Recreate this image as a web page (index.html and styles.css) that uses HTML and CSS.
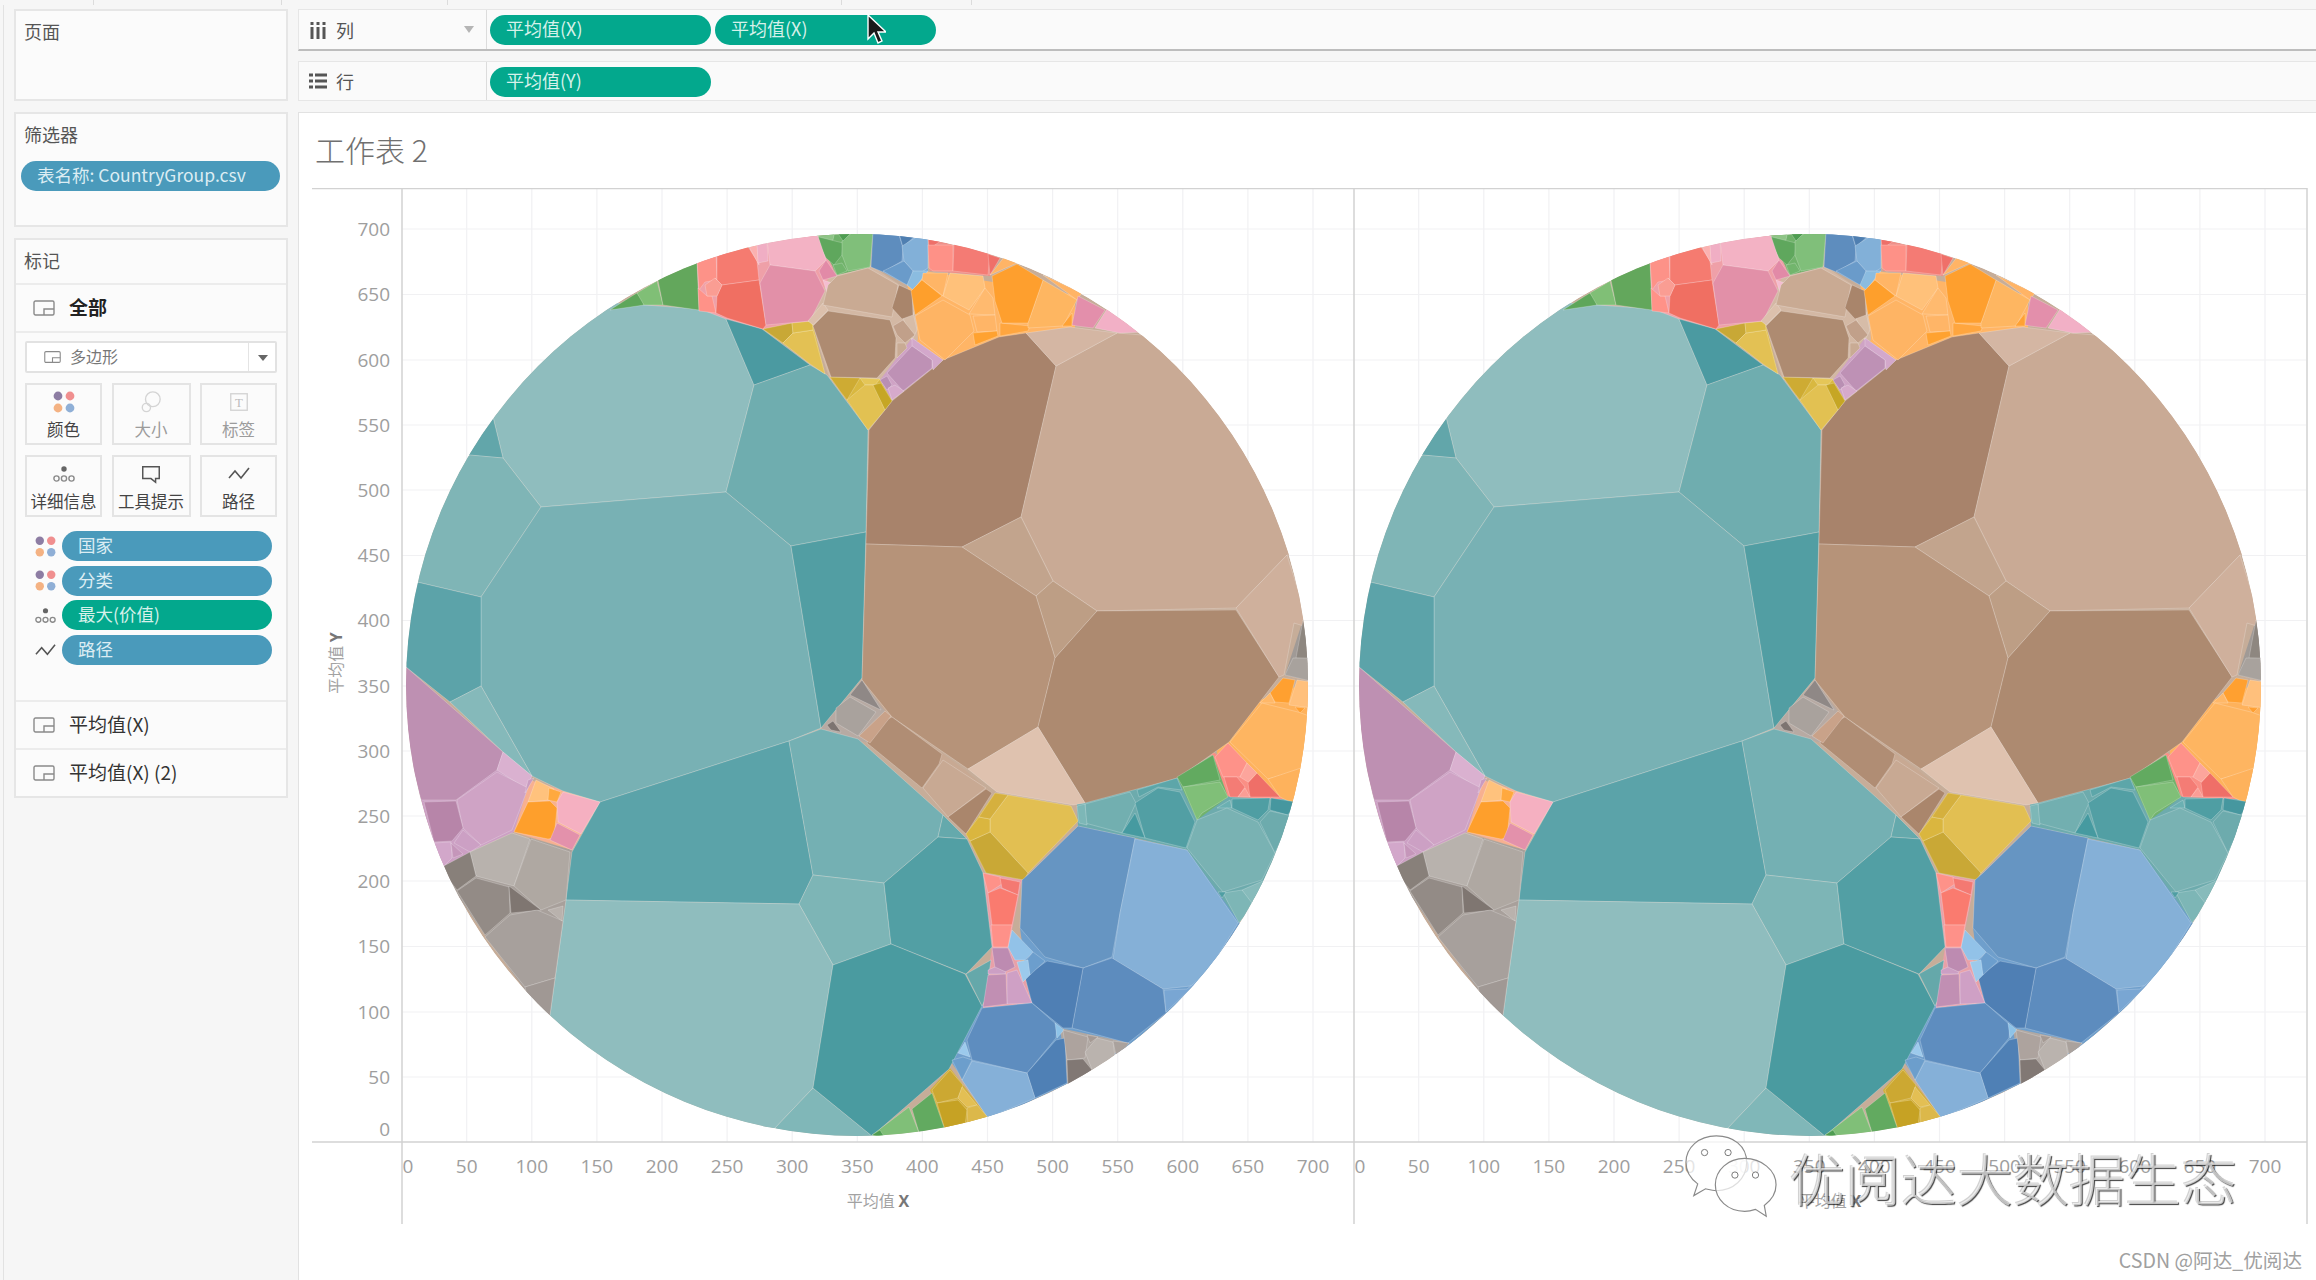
FILE: index.html
```html
<!DOCTYPE html>
<html lang="zh">
<head>
<meta charset="utf-8">
<title>工作表 2</title>
<link rel="stylesheet" href="styles.css">
</head>
<body>
<svg class="defs-only" width="0" height="0" aria-hidden="true">
  <defs>
    <symbol id="i-poly" viewBox="0 0 22 16"><rect x="1" y="1" width="20" height="14" rx="1.5" class="ic-line"/><path d="M11 15V9h10" class="ic-line"/></symbol>
    <symbol id="i-color" viewBox="0 0 22 22"><circle cx="5" cy="5" r="4.4" fill="#8d7da3"/><circle cx="17" cy="5" r="4.4" fill="#f08f8f"/><circle cx="5" cy="17" r="4.4" fill="#f4b283"/><circle cx="17" cy="17" r="4.4" fill="#8fafd6"/></symbol>
    <symbol id="i-detail" viewBox="0 0 22 16"><circle cx="11" cy="3" r="2.7" fill="#666"/><circle cx="3.5" cy="12.5" r="2.6" class="ic-line"/><circle cx="11" cy="12.5" r="2.6" class="ic-line"/><circle cx="18.5" cy="12.5" r="2.6" class="ic-line"/></symbol>
    <symbol id="i-path" viewBox="0 0 22 16"><path d="M1 12 7 5l6 7 8-10" class="ic-dark"/></symbol>
  </defs>
</svg>

<div class="topstrip"><span class="s1"></span><span class="s2"></span><span class="s3"></span><span class="s4"></span><span class="s5"></span></div>

<div class="app">
  <aside class="side">
    <section class="panel pages"><h3 class="ptitle">页面</h3></section>
    <section class="panel filters">
      <h3 class="ptitle">筛选器</h3>
      <div class="pill blue filter-pill">表名称: CountryGroup.csv</div>
    </section>
    <section class="panel marks">
      <h3 class="ptitle marks-title">标记</h3>
      <div class="row row-all"><svg class="ic-poly"><use href="#i-poly"/></svg><b>全部</b></div>
      <div class="marks-body">
        <div class="select">
          <svg class="ic-poly-s"><use href="#i-poly"/></svg><span class="select-text">多边形</span>
          <span class="select-arrow"></span>
        </div>
        <div class="btns">
          <div class="btn"><svg class="bi" viewBox="0 0 22 22"><use href="#i-color"/></svg><span>颜色</span></div>
          <div class="btn off"><svg class="bi" viewBox="0 0 24 24"><circle cx="14" cy="9" r="8" class="ic-pale"/><circle cx="7" cy="18" r="4.5" class="ic-pale"/></svg><span>大小</span></div>
          <div class="btn off"><svg class="bi" viewBox="0 0 24 24"><rect x="3" y="3" width="18" height="18" class="ic-pale"/><text x="12" y="17" class="bi-t">T</text></svg><span>标签</span></div>
          <div class="btn"><svg class="bi" viewBox="0 0 22 16"><use href="#i-detail"/></svg><span>详细信息</span></div>
          <div class="btn"><svg class="bi" viewBox="0 0 24 24"><path d="M3 4h18v13h-4v4l-5-4H3z" class="ic-dark"/></svg><span>工具提示</span></div>
          <div class="btn"><svg class="bi" viewBox="0 0 22 16"><use href="#i-path"/></svg><span>路径</span></div>
        </div>
        <ul class="encs">
          <li class="enc"><svg class="enc-i" viewBox="0 0 22 22"><use href="#i-color"/></svg><div class="pill blue">国家</div></li>
          <li class="enc"><svg class="enc-i" viewBox="0 0 22 22"><use href="#i-color"/></svg><div class="pill blue">分类</div></li>
          <li class="enc"><svg class="enc-i" viewBox="0 0 22 16"><use href="#i-detail"/></svg><div class="pill green">最大(价值)</div></li>
          <li class="enc"><svg class="enc-i" viewBox="0 0 22 16"><use href="#i-path"/></svg><div class="pill blue">路径</div></li>
        </ul>
      </div>
      <div class="row"><svg class="ic-poly"><use href="#i-poly"/></svg>平均值(X)</div>
      <div class="row"><svg class="ic-poly"><use href="#i-poly"/></svg>平均值(X) (2)</div>
    </section>
  </aside>

  <main class="main">
    <div class="shelf shelf-cols">
      <div class="shelf-head">
        <svg class="shelf-ic" viewBox="0 0 17 18"><path d="M1 6h3v12H1zM7 6h3v12H7zM13 6h3v12h-3zM1 1h3v3H1zM7 1h3v3H7zM13 1h3v3h-3z" class="ic-fill"/></svg>
        <span class="shelf-name">列</span><span class="shelf-arrow"></span>
      </div>
      <div class="shelf-pills"><div class="pill green shelf-pill">平均值(X)</div><div class="pill green shelf-pill">平均值(X)</div></div>
    </div>
    <div class="shelf shelf-rows">
      <div class="shelf-head">
        <svg class="shelf-ic" viewBox="0 0 18 15"><path d="M0 0h4v3H0zM6 0h12v3H6zM0 6h4v3H0zM6 6h12v3H6zM0 12h4v3H0zM6 12h12v3H6z" class="ic-fill"/></svg>
        <span class="shelf-name">行</span>
      </div>
      <div class="shelf-pills"><div class="pill green shelf-pill">平均值(Y)</div></div>
    </div>

    <div class="canvas">
      <h1 class="sheet-title">工作表 2</h1>
      <svg class="chart" viewBox="312 188 1998 1040">
        <defs>
          <clipPath id="disc"><circle cx="857" cy="685" r="451"/></clipPath>
          <g id="grid" class="grid">
            <path d="M466.7 188V1142M531.8 188V1142M596.9 188V1142M662 188V1142M727.1 188V1142M792.2 188V1142M857.3 188V1142M922.4 188V1142M987.5 188V1142M1052.6 188V1142M1117.7 188V1142M1182.8 188V1142M1247.9 188V1142M1313 188V1142"/>
            <path d="M402 229H1354M402 294.5H1354M402 360H1354M402 425H1354M402 490H1354M402 555.5H1354M402 620.5H1354M402 686H1354M402 751H1354M402 816H1354M402 881H1354M402 946.5H1354M402 1012H1354M402 1077H1354"/>
          </g>
          <g id="xaxis" class="ticks ticks-x">
            <text x="408" y="1173">0</text><text x="466.7" y="1173">50</text><text x="531.8" y="1173">100</text><text x="596.9" y="1173">150</text><text x="662" y="1173">200</text><text x="727.1" y="1173">250</text><text x="792.2" y="1173">300</text><text x="857.3" y="1173">350</text><text x="922.4" y="1173">400</text><text x="987.5" y="1173">450</text><text x="1052.6" y="1173">500</text><text x="1117.7" y="1173">550</text><text x="1182.8" y="1173">600</text><text x="1247.9" y="1173">650</text><text x="1313" y="1173">700</text>
            <text x="878" y="1207" class="axis-title">平均值 <tspan class="axis-strong">X</tspan></text>
          </g>
          <g id="marks" clip-path="url(#disc)" class="cells">
            <circle cx="857" cy="685" r="451" class="base"/>
            <!-- cluster underlays, showing through the seams -->
            <g class="under">
              <polygon fill="#ffb566" points="905,268 1075,295 1075,330 1000,340 945,362 915,340"/>
              <polygon fill="#efa0a8" points="695,260 830,232 835,295 815,325 766,330 700,312"/>
              <polygon fill="#d3b8a4" points="810,320 830,275 870,265 915,295 918,340 880,380 830,380"/>
              <polygon fill="#feb25c" points="1215,740 1260,700 1315,680 1315,800 1225,800"/>
              <polygon fill="#fa8f85" points="1210,750 1285,800 1225,800"/>
              <polygon fill="#6dabad" points="1077,804 1180,775 1230,797 1300,800 1260,890 1235,925 1187,850 1135,838 1078,826"/>
              <polygon fill="#6f9fcc" points="950,1060 980,1005 1030,1003 1020,928 1078,826 1187,850 1240,923 1200,985 1170,1010 1130,1045 1065,1085 990,1120"/>
              <polygon fill="#e8a0a8" points="983,873 1022,880 1012,930 1032,1003 983,1008 992,947"/>
              <polygon fill="#b0a8a3" points="1060,1028 1130,1043 1068,1086"/>
              <polygon fill="#d4b03c" points="930,1090 950,1068 990,1120 945,1130"/>
              <polygon fill="#a8a09b" points="440,870 470,852 530,838 572,850 566,900 550,1015 525,990 485,935"/>
              <polygon fill="#cca0c4" points="421,800 456,800 503,752 532,776 514,832 470,852 440,870"/>
              <polygon fill="#f7b090" points="514,832 530,780 600,802 572,850"/>
              <polygon fill="#c8a993" points="860,680 885,711 948,817 966,834 992,793 965,770 892,717"/>
              <polygon fill="#b7aaa3" points="862,680 885,711 870,743 830,735 821,728"/>
              <polygon fill="#d9b743" points="966,834 995,793 1071,806 1078,821 1028,873 986,873"/>
              <polygon fill="#e0bf50" points="763,329 812,321 825,374"/>
              <polygon fill="#d9b840" points="830,377 880,379 892,401 868,430"/>
              <polygon fill="#cfa3c5" points="880,380 912,338 943,360 904,391 892,400"/>
              <polygon fill="#7aa8d4" points="871,233 928,236 928,271 907,285 883,272"/>
              <polygon fill="#70b26a" points="815,233 873,233 870,267 837,275"/>
              <polygon fill="#ef8f88" points="928,238 1000,258 990,276 930,271"/>
              <polygon fill="#71b26c" points="1177,777 1213,755 1228,797 1197,820"/>
              <polygon fill="#a09a96" points="1285,675 1303,620 1315,682"/>
            </g>
            <!-- teal -->
            <polygon fill="#8fbdbe" points="617,303 700,309 726,319 754,385 726,492 541,507 503,458 493,417 480,380 520,300"/>
            <polygon fill="#4b9aa1" points="726,319 762,329 810,365 754,385"/>
            <polygon fill="#6fadaf" points="754,385 810,365 827,375 868,430 866,532 791,546 726,492"/>
            <polygon fill="#62a6aa" points="493,417 503,458 468,455 480,410"/>
            <polygon fill="#7fb5b6" points="470,455 503,458 541,507 481,597 417,582 400,500"/>
            <polygon fill="#78b1b4" points="541,507 726,492 791,546 821,728 789,741 600,802 563,791 532,776 481,686 481,597"/>
            <polygon fill="#5ca3a9" points="417,582 481,597 481,686 450,702 406,667 395,620"/>
            <polygon fill="#85b9ba" points="450,702 481,686 532,776 503,752"/>
            <polygon fill="#529ea3" points="791,546 866,532 862,678 821,728"/>
            <polygon fill="#5ba3a9" points="789,741 813,875 799,904 566,900 572,852 600,802"/>
            <polygon fill="#74b0b3" points="821,729 858,739 943,815 938,837 884,883 813,875 789,741"/>
            <polygon fill="#65a9ac" points="943,815 967,839 938,837"/>
            <polygon fill="#7db5b6" points="813,875 884,883 891,944 833,965 799,904"/>
            <polygon fill="#529fa4" points="884,883 938,837 967,839 983,873 992,947 966,974 891,944"/>
            <polygon fill="#8fbdbe" points="566,900 799,904 833,965 813,1088 775,1128 700,1180 500,1080 550,1015"/>
            <polygon fill="#80b7b8" points="813,1088 775,1128 800,1160 872,1136"/>
            <polygon fill="#4a9ba0" points="891,944 965,974 982,1006 949,1069 872,1136 813,1088 833,965"/>
            <polygon fill="#65a8aa" points="966,974 991,960 985,1000 982,1006"/>
            <!-- brown -->
            <polygon fill="#a8836b" points="1026,333 1056,366 1021,517 962,547 866,544 869,430 892,401 943,360 999,337"/>
            <polygon fill="#c9aa95" points="1056,366 1117,333 1142,335 1200,380 1320,555 1287,555 1236,608 1097,611 1053,581 1021,517"/>
            <polygon fill="#d4b6a3" points="1026,333 1070,327 1117,333 1056,366"/>
            <polygon fill="#c2a48d" points="962,547 1021,517 1053,581 1036,596"/>
            <polygon fill="#bd9e85" points="1053,581 1097,611 1055,658 1036,596"/>
            <polygon fill="#b69379" points="866,544 962,547 1036,596 1055,658 1038,727 968,769 892,717 862,680"/>
            <polygon fill="#ad8a70" points="1097,611 1236,610 1279,677 1229,742 1178,778 1085,803 1038,727 1055,658"/>
            <polygon fill="#cfb09c" points="1236,608 1287,555 1310,628 1294,623 1284,675 1279,677"/>
            <polygon fill="#dfc2af" points="968,769 1038,727 1085,803 1073,805 997,792"/>
            <polygon fill="#b08d74" points="892,717 942,754 939,764 922,788 867,743 876,725"/>
            <polygon fill="#c8a993" points="943,760 986,788 948,817 923,788"/>
            <polygon fill="#aa866c" points="986,789 992,793 966,834 948,817"/>
            <polygon fill="#c9a289" points="885,711 891,716 870,743 859,736"/>
            <!-- grey centre -->
            <polygon fill="#8f8886" points="862,680 881,710 850,695"/>
            <polygon fill="#a9a29d" points="850,697 876,712 858,736 836,723 836,708"/>
            <polygon fill="#7d7471" points="827,725 833,721 841,732 831,730"/>
            <!-- yellow centre -->
            <polygon fill="#e2bf52" points="1008,795 1071,806 1078,821 1028,873 990,832 990,819"/>
            <polygon fill="#c9a836" points="990,832 1028,873 1024,880 986,873 970,841"/>
            <polygon fill="#dab63f" points="979,817 990,819 990,832 970,841 966,834"/>
            <polygon fill="#d5b03e" points="995,793 1008,795 990,819 979,817"/>
            <!-- yellow top -->
            <polygon fill="#c8a836" points="763,329 792,323 793,333 783,343"/>
            <polygon fill="#e3c154" points="783,343 793,333 813,330 825,374 810,364"/>
            <polygon fill="#ddbc48" points="792,323 812,321 813,330 793,333"/>
            <polygon fill="#ceab33" points="830,377 860,378 847,400 840,391"/>
            <polygon fill="#e5c658" points="860,378 880,379 875,385 865,385"/>
            <polygon fill="#e2c152" points="865,385 875,385 885,410 868,430 847,400"/>
            <polygon fill="#c6a624" points="873,385 881,383 892,401 885,410"/>
            <!-- greens top -->
            <polygon fill="#5ea65a" points="610,310 632,296 637,293 643,300 644,305"/>
            <polygon fill="#80bf76" points="637,293 657,281 663,305 644,305"/>
            <polygon fill="#63a75c" points="658,280 688,264 697,262 699,310 663,305"/>
            <polygon fill="#8ec486" points="815,233 835,230 833,240 825,245"/>
            <polygon fill="#5fa75d" points="815,236 843,243 842,255 834,265 826,258"/>
            <polygon fill="#80bf7a" points="842,241 853,232 873,232 870,267 848,271 842,255"/>
            <polygon fill="#4f9d52" points="837,232 852,232 843,241"/>
            <polygon fill="#72b56d" points="833,265 842,263 847,271 837,275"/>
            <!-- reds top -->
            <polygon fill="#fd9288" points="697,260 716,252 717,280 705,282 699,290"/>
            <polygon fill="#ff9288" points="698,288 707,296 712,296 716,313 699,311"/>
            <polygon fill="#f57b70" points="717,256 747,245 757,261 759,280 722,285 715,278 717,280"/>
            <polygon fill="#f06f62" points="717,296 722,285 759,280 766,325 763,329 727,318 716,313"/>
            <polygon fill="#fa9d93" points="705,285 715,278 722,285 717,296 707,296"/>
            <!-- pinks top -->
            <polygon fill="#fbb1b0" points="747,243 757,243 759,265"/>
            <polygon fill="#f0aec4" points="757,243 767,241 768,261 758,263"/>
            <polygon fill="#f3b2c4" points="767,240 817,233 826,260 815,271 770,265"/>
            <polygon fill="#e290a8" points="770,265 815,271 825,291 810,321 766,325 760,283"/>
            <polygon fill="#e28aa7" points="826,260 837,276 823,280 819,271"/>
            <polygon fill="#f4bdd0" points="823,280 832,283 827,293"/>
            <!-- tan top -->
            <polygon fill="#dcc0ac" points="823,303 808,321 813,325 828,310"/>
            <polygon fill="#c9aa93" points="868,268 898,285 892,317 823,305 828,285 837,276"/>
            <polygon fill="#d6bca8" points="903,318 913,312 917,330 912,340"/>
            <polygon fill="#ae8b71" points="828,311 890,320 896,338 895,358 877,378 831,377 813,326"/>
            <polygon fill="#a9856b" points="899,285 912,291 913,315 902,319 892,308"/>
            <polygon fill="#c1a08a" points="893,326 903,320 915,335 905,343 897,335"/>
            <polygon fill="#c9ab94" points="897,343 905,343 907,348 897,358"/>
            <!-- purple top -->
            <polygon fill="#d3a8cb" points="912,338 943,360 933,370 932,360 912,346"/>
            <polygon fill="#be91b5" points="912,346 932,360 932,368 903,391 887,373"/>
            <polygon fill="#b98fb3" points="880,380 887,376 892,385 887,390"/>
            <polygon fill="#d6aacb" points="888,388 895,385 904,391 892,400"/>
            <!-- blues top -->
            <polygon fill="#5e8dbe" points="873,232 898,232 903,248 902,261 883,272 871,267"/>
            <polygon fill="#4f7fb1" points="898,230 918,233 903,247"/>
            <polygon fill="#82b0d8" points="902,246 918,236 928,239 928,268 920,273 913,271 904,261"/>
            <polygon fill="#6a9bca" points="904,261 913,271 912,280 907,285 883,271"/>
            <polygon fill="#8bbce0" points="913,271 928,271 913,290 907,285"/>
            <!-- oranges top -->
            <polygon fill="#ee6f69" points="928,236 942,240 929,249"/>
            <polygon fill="#fe9187" points="928,245 953,245 953,271 933,271 929,268"/>
            <polygon fill="#f47b74" points="954,243 990,254 988,275 953,271"/>
            <polygon fill="#ef7069" points="988,254 1000,258 990,275"/>
            <polygon fill="#ffb466" points="990,275 1005,256 1017,263"/>
            <polygon fill="#ffb566" points="923,273 948,273 943,296 922,280"/>
            <polygon fill="#ffc17a" points="950,273 983,276 985,288 969,310 943,296"/>
            <polygon fill="#ffba6f" points="985,288 993,298 995,315 969,314"/>
            <polygon fill="#fe9f2c" points="922,280 942,296 915,315 911,291"/>
            <polygon fill="#feb464" points="915,316 943,300 970,315 974,331 945,360 920,340"/>
            <polygon fill="#ffb567" points="973,316 995,315 997,331 977,332"/>
            <polygon fill="#ffa230" points="973,333 997,331 998,336 975,345"/>
            <polygon fill="#ffa63f" points="1000,323 1030,326 1028,331 1000,336"/>
            <polygon fill="#ffb466" points="1043,275 1082,293 1077,300"/>
            <polygon fill="#feb661" points="1043,280 1077,300 1063,326 1028,328 1028,323"/>
            <polygon fill="#fe9f2e" points="992,276 1017,264 1043,280 1028,323 1002,323 995,301"/>
            <polygon fill="#ffa234" points="1072,313 1062,326 1072,326"/>
            <polygon fill="#e38fab" points="1078,296 1105,310 1093,328 1077,326 1072,325"/>
            <polygon fill="#f2b0c6" points="1107,309 1145,332 1120,333 1095,328"/>
            <!-- right grey / orange -->
            <polygon fill="#8e8780" points="1303,620 1315,659 1296,658"/>
            <polygon fill="#a8a29d" points="1293,658 1315,658 1315,682 1285,675"/>
            <polygon fill="#ffa030" points="1270,693 1283,678 1295,680 1289,703 1275,702"/>
            <polygon fill="#ffc07c" points="1297,680 1312,682 1312,708 1289,705"/>
            <polygon fill="#ffb868" points="1260,703 1270,693 1275,703"/>
            <polygon fill="#feb561" points="1230,742 1262,703 1298,712 1312,717 1304,769 1268,779"/>
            <polygon fill="#ff9f30" points="1295,707 1305,708 1300,713"/>
            <polygon fill="#feb25c" points="1268,779 1304,767 1296,805 1280,797"/>
            <polygon fill="#fe9289" points="1215,757 1228,743 1247,763 1240,777 1223,777"/>
            <polygon fill="#fca59c" points="1247,763 1257,773 1248,782 1240,777"/>
            <polygon fill="#f47c75" points="1224,777 1237,777 1245,787 1238,797 1230,797"/>
            <polygon fill="#ef6f68" points="1248,783 1257,773 1280,797 1250,797"/>
            <polygon fill="#fb9d95" points="1238,797 1245,788 1250,797"/>
            <polygon fill="#62aa60" points="1177,777 1213,755 1220,780 1183,787"/>
            <polygon fill="#80bf78" points="1183,787 1220,782 1228,797 1202,813 1197,820"/>
            <!-- right teal -->
            <polygon fill="#72afb0" points="1085,804 1130,792 1136,803 1122,833 1085,823"/>
            <polygon fill="#5da6a9" points="1137,790 1177,778 1182,790 1158,787 1139,797"/>
            <polygon fill="#529fa4" points="1135,803 1158,788 1180,792 1195,822 1186,848 1145,838"/>
            <polygon fill="#469aa0" points="1135,813 1145,838 1122,833"/>
            <polygon fill="#7db7b7" points="1077,806 1085,804 1087,825 1079,823"/>
            <polygon fill="#6bb0b2" points="1217,808 1230,800 1232,808 1227,808"/>
            <polygon fill="#79b2b3" points="1187,848 1197,820 1227,808 1258,822 1275,853 1262,880 1223,892"/>
            <polygon fill="#4f9ea3" points="1232,799 1270,798 1268,810 1258,820 1232,808"/>
            <polygon fill="#46979f" points="1271,798 1296,802 1288,815 1270,810"/>
            <polygon fill="#6dabad" points="1270,811 1292,816 1275,853 1260,822"/>
            <polygon fill="#7db6b6" points="1223,893 1242,890 1255,903 1239,923"/>
            <polygon fill="#87bbbb" points="1242,890 1265,880 1252,903"/>
            <polygon fill="#4f9ea3" points="1218,892 1226,892 1222,898"/>
            <!-- blue right -->
            <polygon fill="#6695c2" points="1078,826 1135,838 1120,913 1112,957 1083,968 1045,957 1020,928 1022,880 1030,873"/>
            <polygon fill="#85b0d7" points="1135,839 1187,850 1238,923 1200,985 1163,989 1113,959 1120,913"/>
            <polygon fill="#5d8cbe" points="1083,968 1112,958 1163,989 1166,1013 1128,1043 1072,1028"/>
            <polygon fill="#79a6d3" points="1164,990 1187,989 1207,973 1166,1012"/>
            <polygon fill="#4f7fb4" points="1025,977 1047,961 1083,968 1072,1028 1063,1028 1032,1003"/>
            <polygon fill="#92c2e8" points="1012,930 1033,952 1025,960 1015,960 1008,947"/>
            <polygon fill="#6c9ecd" points="1033,952 1045,961 1030,975 1025,962"/>
            <polygon fill="#9ccaec" points="1017,962 1028,960 1030,975 1023,982"/>
            <!-- mid pink -->
            <polygon fill="#bd8bb1" points="992,948 1008,948 1015,967 1005,972 995,968"/>
            <polygon fill="#cc9fc4" points="988,970 995,967 1006,972 1005,974 988,974"/>
            <polygon fill="#cfa0c5" points="1007,973 1017,970 1032,1003 1007,1004"/>
            <polygon fill="#c18fb3" points="988,975 1006,974 1007,1004 983,1007"/>
            <!-- mid salmon -->
            <polygon fill="#fe9289" points="983,873 1000,877 1002,884 988,893"/>
            <polygon fill="#f47972" points="1000,878 1020,882 1018,895 1002,888"/>
            <polygon fill="#fa7b6f" points="988,893 1000,888 1018,895 1012,925 992,925"/>
            <polygon fill="#fe9189" points="991,925 1012,925 1008,947 993,947"/>
            <!-- lower blues -->
            <polygon fill="#5e8dbf" points="982,1008 1032,1003 1057,1025 1056,1038 1027,1073 972,1060 967,1040"/>
            <polygon fill="#4f80b5" points="1027,1073 1056,1040 1065,1038 1067,1083 1035,1098"/>
            <polygon fill="#85b0d8" points="972,1061 1027,1073 1035,1098 988,1118 962,1080"/>
            <polygon fill="#6c9ecc" points="952,1060 963,1057 972,1060 962,1080"/>
            <polygon fill="#9ccaec" points="958,1053 965,1042 970,1057"/>
            <polygon fill="#8ec3e8" points="1055,1023 1064,1030 1057,1038"/>
            <!-- bottom greys -->
            <polygon fill="#ada39e" points="1063,1030 1088,1037 1085,1058 1067,1060"/>
            <polygon fill="#a59a94" points="1087,1035 1098,1037 1090,1043"/>
            <polygon fill="#bab3ae" points="1085,1052 1097,1038 1113,1042 1115,1057 1093,1072"/>
            <polygon fill="#aaa29d" points="1113,1041 1129,1043 1117,1060"/>
            <polygon fill="#817874" points="1067,1060 1083,1059 1092,1070 1068,1086"/>
            <!-- bottom gold / green -->
            <polygon fill="#cca832" points="932,1090 950,1070 963,1085 958,1098 937,1103"/>
            <polygon fill="#e3bf54" points="962,1087 977,1105 967,1107 958,1098"/>
            <polygon fill="#c6a224" points="937,1103 958,1100 967,1110 965,1126 945,1130"/>
            <polygon fill="#dcb84a" points="967,1108 977,1105 990,1120 968,1126"/>
            <polygon fill="#62aa60" points="912,1109 932,1093 945,1130 920,1136"/>
            <polygon fill="#80bf78" points="872,1135 909,1107 921,1138 880,1140"/>
            <polygon fill="#4f9d52" points="872,1135 880,1130 885,1138"/>
            <!-- left purple -->
            <polygon fill="#be90b2" points="406,667 503,752 497,770 456,800 421,800 395,700"/>
            <polygon fill="#dab1d0" points="503,752 532,776 525,788 497,770"/>
            <polygon fill="#cfa3c5" points="497,772 528,788 512,830 481,845 463,828 457,800"/>
            <polygon fill="#b785a9" points="424,802 456,801 463,828 452,841 434,842"/>
            <polygon fill="#cca0c4" points="463,830 481,845 470,852 454,843"/>
            <polygon fill="#d2a7ca" points="434,843 451,842 452,858 440,870"/>
            <polygon fill="#c596ba" points="451,843 463,854 453,858"/>
            <polygon fill="#c99bc0" points="528,780 534,778 525,793"/>
            <!-- left orange / pink -->
            <polygon fill="#ffc27d" points="536,780 554,789 550,800 528,802"/>
            <polygon fill="#ffa93f" points="549,788 561,792 557,802 548,800"/>
            <polygon fill="#fe9f2c" points="528,802 550,801 557,808 554,838 548,839 514,832"/>
            <polygon fill="#f5b0c1" points="563,792 600,802 581,834 558,822 557,802"/>
            <polygon fill="#e391ab" points="557,823 580,835 572,850 550,840"/>
            <!-- left grey -->
            <polygon fill="#b8b2ad" points="470,852 512,833 530,839 514,886 476,876"/>
            <polygon fill="#afa8a2" points="531,839 570,852 566,900 541,910 514,886"/>
            <polygon fill="#88807a" points="440,868 470,852 476,876 457,890"/>
            <polygon fill="#938b86" points="457,891 476,878 509,887 510,913 485,935"/>
            <polygon fill="#7f7671" points="509,886 541,910 511,913"/>
            <polygon fill="#a7a09c" points="485,937 510,915 537,910 563,921 555,978 525,987"/>
            <polygon fill="#b9b2ad" points="548,910 563,906 562,921"/>
            <polygon fill="#a09894" points="525,987 555,978 550,1015 535,1030"/>
          </g>
        </defs>

        <use href="#grid"/>
        <use href="#grid" x="952"/>
        <use href="#marks"/>
        <use href="#marks" x="953"/>
        <path class="frame" d="M312 188.5H2307M312 1142H2307M402 188V1224M1354 188V1224M2307 188V1224"/>
        <g class="ticks ticks-y">
          <text x="390" y="236">700</text><text x="390" y="301">650</text><text x="390" y="367">600</text><text x="390" y="432">550</text><text x="390" y="497">500</text><text x="390" y="562">450</text><text x="390" y="627">400</text><text x="390" y="693">350</text><text x="390" y="758">300</text><text x="390" y="823">250</text><text x="390" y="888">200</text><text x="390" y="953">150</text><text x="390" y="1019">100</text><text x="390" y="1084">50</text><text x="390" y="1136">0</text>
        </g>
        <text class="axis-title" transform="translate(342 663) rotate(-90)">平均值 <tspan class="axis-strong">Y</tspan></text>
        <use href="#xaxis"/>
        <use href="#xaxis" x="952"/>
      </svg>
    </div>
  </main>
</div>

<svg class="cursor" viewBox="0 0 20 30"><path d="M2 1v24l6-6 4 10 4-2-4-9h8z"/></svg>

<div class="watermark">
  <svg class="wx" viewBox="0 0 96 92">
    <path class="wx-b" d="M33 3C15 3 2 15 2 30c0 9 5 17 12 22l-4 12 12-7c4 1 7 2 11 2 17 0 31-12 31-29S50 3 33 3z"/>
    <path class="wx-b" d="M62 26c-17 0-30 12-30 27s13 27 30 27c4 0 8-1 11-2l11 7-2-11c7-5 12-13 12-21 0-15-15-27-32-27z"/>
    <circle cx="21" cy="20" r="3.2" class="wx-e"/><circle cx="45" cy="20" r="3.2" class="wx-e"/>
    <circle cx="52" cy="43" r="3.2" class="wx-e"/><circle cx="73" cy="43" r="3.2" class="wx-e"/>
  </svg>
  <span class="wm-text">优阅达大数据生态</span>
</div>
<div class="credit">CSDN @阿达_优阅达</div>
</body>
</html>
```

FILE: styles.css
```css
* { box-sizing: border-box; }
html, body { margin: 0; padding: 0; }
body {
  width: 2316px;
  height: 1280px;
  overflow: hidden;
  position: relative;
  background: #f6f6f6;
  color: #444;
  font-family: "Noto Sans CJK SC", "Noto Sans", sans-serif;
  font-size: 18px;
}
.defs-only { position: absolute; }
.ic-line { fill: none; stroke: #8a8a8a; stroke-width: 1.4; }
.ic-dark { fill: none; stroke: #555; stroke-width: 1.6; }
.ic-pale { fill: none; stroke: #d4d4d4; stroke-width: 1.5; }
.ic-fill { fill: #555; }

.topstrip { display: flex; height: 5px; }
.topstrip span { border-right: 1px solid #dcdcdc; }
.s1 { width: 94px; }
.s2 { width: 188px; }
.s3 { width: 166px; }
.s4 { width: 394px; }
.s5 { width: 130px; }

.app { display: flex; height: 1275px; margin-left: 3px; border-left: 1px solid #e2e2e2; }

/* sidebar */
.side {
  width: 294px;
  flex: none;
  padding: 4px 0 0 10px;
  display: flex;
  flex-direction: column;
  gap: 11px;
}
.panel { width: 274px; background: #fbfbfb; border: 2px solid #e6e6e6; }
.pages { height: 92px; }
.filters { height: 115px; }
.ptitle { margin: 0; font-size: 18px; font-weight: 400; line-height: 24px; color: #555; padding: 8px 0 0 8px; }
.filter-pill { margin: 15px 6px 0 5px; height: 30px; font-size: 18px; }
.marks-title { height: 45px; padding-top: 8px; border-bottom: 2px solid #ececec; }
.row {
  height: 48px;
  display: flex;
  align-items: center;
  gap: 14px;
  padding: 0 0 4px 17px;
  font-size: 19px;
  color: #333;
  border-top: 2px solid #ececec;
}
.row-all { border-top: 0; height: 46px; }
.row b { font-weight: 700; color: #222; }
.ic-poly { width: 22px; height: 16px; flex: none; margin-top: 4px; }
.marks-body { padding: 8px 8px 35px 9px; border-top: 2px solid #ececec; }

.select {
  height: 32px;
  width: 252px;
  display: flex;
  align-items: center;
  border: 2px solid #e2e2e2;
  border-radius: 2px;
  background: #fff;
  padding: 0 0 2px 17px;
  color: #777;
  font-size: 16px;
  position: relative;
}
.ic-poly-s { width: 17px; height: 14px; margin: 2px 9px 0 0; }
.select-arrow {
  position: absolute;
  right: 0;
  top: 0;
  width: 27px;
  height: 28px;
  border-left: 1px solid #e4e4e4;
}
.select-arrow::after {
  content: "";
  position: absolute;
  left: 9px;
  top: 12px;
  border: 5px solid transparent;
  border-top: 6px solid #666;
  border-bottom: 0;
}
.btns {
  display: grid;
  grid-template-columns: 77px 79px 77px;
  grid-auto-rows: 62px;
  gap: 10px 9.5px;
  margin-top: 10px;
}
.btn {
  border: 2px solid #e4e4e4;
  background: #fbfbfb;
  display: flex;
  flex-direction: column;
  align-items: center;
  justify-content: flex-end;
  padding-bottom: 2px;
  font-size: 16.5px;
  line-height: 24px;
  color: #444;
  white-space: nowrap;
}
.btn.off { color: #9c9c9c; }
.bi { width: 22px; height: 22px; margin-bottom: 4px; }
.bi-t { font-family: "Liberation Serif", serif; font-size: 14px; text-anchor: middle; fill: #bbb; }

.encs { list-style: none; margin: 14px 0 0; padding: 0 0 0 10px; display: flex; flex-direction: column; gap: 4.7px; }
.enc { display: flex; align-items: center; gap: 6px; }
.enc-i { width: 21px; height: 21px; flex: none; }
.enc .pill { width: 210px; }

/* pills */
.pill {
  height: 30px;
  border-radius: 15px;
  padding-left: 16px;
  font-size: 17.5px;
  line-height: 27px;
  color: #dcedf3;
  white-space: nowrap;
}
.blue { background: #4a9abb; }
.green { background: #03a88d; color: #d6f1ea; }

/* shelves */
.main { flex: 1; display: flex; flex-direction: column; min-width: 0; padding-top: 4px; }
.shelf {
  display: flex;
  background: #fafafa;
  border: 1px solid #e6e6e6;
  border-right: 0;
}
.shelf-cols { height: 42px; border-bottom: 2px solid #bdbdbd; }
.shelf-rows { height: 40px; margin-top: 10px; }
.shelf-head {
  width: 188px;
  flex: none;
  display: flex;
  align-items: center;
  padding-left: 10px;
  border-right: 1px solid #dcdcdc;
  position: relative;
}
.shelf-ic { width: 18px; height: 18px; margin-right: 9px; }
.shelf-name { font-size: 18px; color: #555; }
.shelf-arrow {
  position: absolute;
  left: 165px;
  top: 16px;
  border: 5px solid transparent;
  border-top: 7px solid #b5b5b5;
  border-bottom: 0;
}
.shelf-pills { display: flex; gap: 4px; padding: 5px 0 0 3px; }
.shelf-pill { width: 221px; font-size: 18px; }

/* canvas */
.canvas {
  flex: 1;
  margin-top: 11px;
  background: #fff;
  border-top: 1px solid #e2e2e2;
  border-left: 1px solid #e2e2e2;
  padding-left: 13px;
}
.sheet-title {
  height: 75px;
  margin: 0;
  padding-left: 3px;
  font-size: 30px;
  font-weight: 300;
  line-height: 73px;
  color: #707070;
}
.chart { display: block; width: 1998px; height: 1040px; }

.grid path { fill: none; stroke: #f1f1f3; stroke-width: 1.2; }
.frame { fill: none; stroke: #d2d2d2; stroke-width: 1.5; }
.cells polygon { stroke: rgba(255,255,255,.28); stroke-width: .8; stroke-linejoin: round; }
.cells .under polygon { stroke: none; }
.base { fill: #c6ad99; }
.ticks text { font-family: "Open Sans", "Noto Sans", sans-serif; font-size: 19px; fill: #9e9e9e; }
.ticks-y text { text-anchor: end; }
.ticks-x text { text-anchor: middle; }
.ticks text.axis-title, .axis-title {
  font-family: "Noto Sans CJK SC", sans-serif;
  font-size: 16px;
  fill: #a2a2a2;
  text-anchor: middle;
}
.axis-strong { font-family: "Open Sans", sans-serif; font-weight: 700; fill: #777; }

/* overlays */
.cursor { position: absolute; left: 866px; top: 14px; width: 20px; height: 30px; }
.cursor path { fill: #1a1a1a; stroke: #fff; stroke-width: 1.4; }

.watermark {
  position: absolute;
  left: 1684px;
  top: 1129px;
  display: flex;
  align-items: center;
  gap: 11px;
}
.wx { width: 94px; height: 92px; flex: none; margin-top: 3px; }
.wx-b { fill: rgba(255,255,255,.72); stroke: #8a8a8a; stroke-width: 1.2; }
.wx-e { fill: #fff; stroke: #777; stroke-width: 1; }
.wm-text {
  font-size: 56px;
  font-weight: 300;
  line-height: 70px;
  color: rgba(255,255,255,.68);
  text-shadow: 1px 1px 1px rgba(0,0,0,.75), -1px -1px 0 rgba(0,0,0,.18);
  white-space: nowrap;
}
.credit {
  position: absolute;
  right: 14px;
  bottom: 6px;
  font-size: 19.6px;
  color: #a0a0a0;
  white-space: nowrap;
}
```
